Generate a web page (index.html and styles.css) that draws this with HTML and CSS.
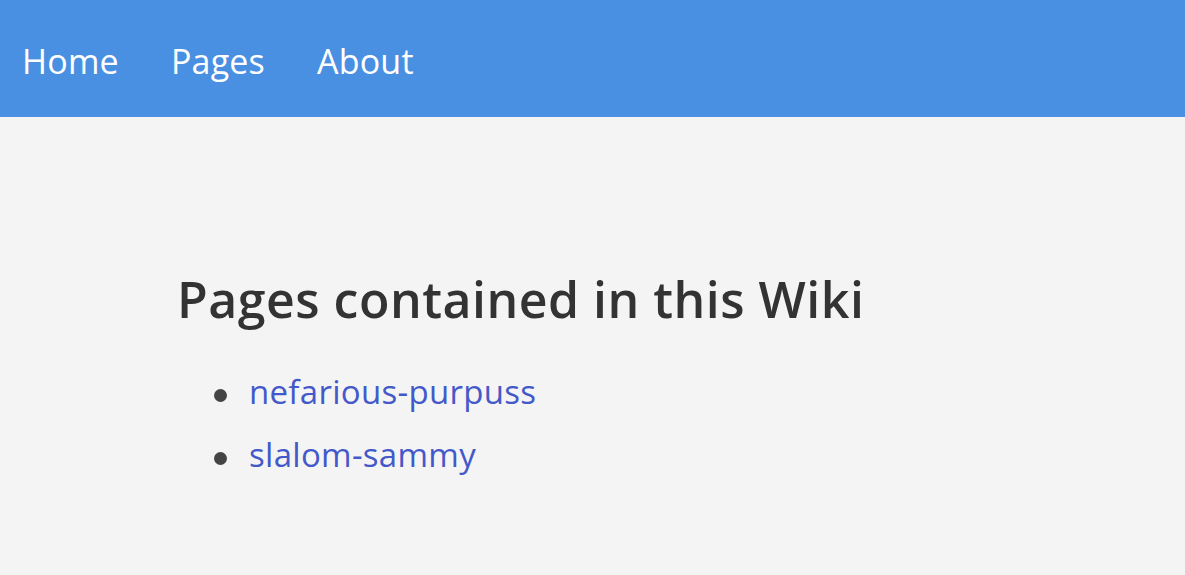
FILE: index.html
```html
<!DOCTYPE html>
<html>
<head>
<meta charset="utf-8">
<link rel="stylesheet" href="styles.css">
</head>
<body>
<nav class="nav">
  <a class="nav-link" href="#">Home</a>
  <a class="nav-link" href="#">Pages</a>
  <a class="nav-link" href="#">About</a>
</nav>
<main class="content">
  <h1 class="title">Pages contained in this Wiki</h1>
  <ul class="page-list">
    <li class="page-item"><a href="#">nefarious-purpuss</a></li>
    <li class="page-item"><a href="#">slalom-sammy</a></li>
  </ul>
</main>
</body>
</html>
```

FILE: styles.css
```css
html, body {
  margin: 0;
  padding: 0;
  background: #f4f4f4;
  font-family: "Open Sans", "Noto Sans", sans-serif;
  color: #333;
}
.nav {
  background: #4a90e2;
  height: 117px;
  box-sizing: border-box;
  padding: 4px 0 0 22px;
  display: flex;
  align-items: center;
  gap: 52px;
}
.nav-link {
  color: #fff;
  text-decoration: none;
  font-size: 34px;
  letter-spacing: 0.2px;
}
.content {
  padding: 148px 0 0 177px;
}
.title {
  margin: 0;
  font-size: 50px;
  letter-spacing: 0.5px;
  font-weight: 600;
  color: #333;
}
.page-list {
  list-style: none;
  margin: 27px 0 0;
  padding-left: 37px;
  font-size: 33px;
  letter-spacing: 0.3px;
}
.page-item {
  line-height: 63px;
}
.page-item::before {
  content: "";
  display: inline-block;
  width: 13px;
  height: 13px;
  border-radius: 50%;
  background: #444;
  vertical-align: middle;
  margin-right: 22px;
}
.page-item a {
  color: #4459c9;
  text-decoration: none;
}
```
